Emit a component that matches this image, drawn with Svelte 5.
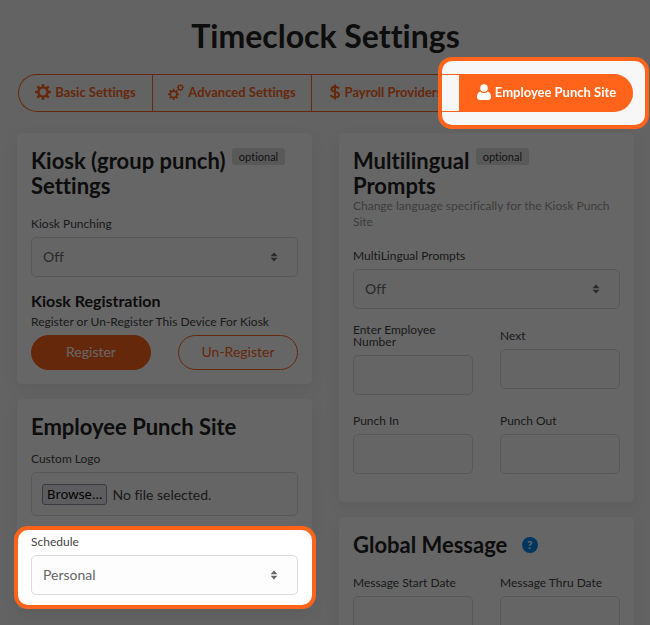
<script lang="ts">
	let schedule = $state('Personal');
	let kioskPunching = $state('Off');
	let multilingual = $state('Off');
	let fileName = $state('');
	let fileInput: HTMLInputElement;

	const prompts = [
		{ id: 'enter-number', label: 'Enter Employee Number' },
		{ id: 'next', label: 'Next' },
		{ id: 'punch-in', label: 'Punch In' },
		{ id: 'punch-out', label: 'Punch Out' }
	];

	const gearTeeth = [0, 45, 90, 135, 180, 225, 270, 315];

	function onFileChange() {
		fileName = fileInput.files?.[0]?.name ?? '';
	}
</script>

{#snippet gear(cx: number, cy: number, scale: number)}
	<g transform="translate({cx} {cy}) scale({scale})">
		<circle r="4.6" fill="none" stroke="currentColor" stroke-width="2.4" />
		{#each gearTeeth as angle}
			<path d="M-1.5 -5 L-1.1 -8 H1.1 L1.5 -5Z" fill="currentColor" transform="rotate({angle})" />
		{/each}
	</g>
{/snippet}

{#snippet arrows()}
	<svg class="arrows" width="8" height="10" viewBox="0 0 8 10" aria-hidden="true">
		<path d="M4 0.4 L7.4 4.2 H0.6Z M4 9.6 L0.6 5.8 H7.4Z" fill="currentColor" />
	</svg>
{/snippet}

<main class="page">
	<h1>Timeclock Settings</h1>

	<nav class="tabs">
		<button class="tab">
			<svg width="16" height="16" viewBox="0 0 16 16" aria-hidden="true">
				{@render gear(8, 8, 1)}
			</svg>
			Basic Settings
		</button>
		<button class="tab">
			<svg width="16" height="16" viewBox="0 0 16 16" aria-hidden="true">
				{@render gear(5.6, 10.3, 0.7)}
				{@render gear(12.4, 3.6, 0.45)}
			</svg>
			Advanced Settings
		</button>
		<button class="tab">
			<svg width="12" height="16" viewBox="0 0 12 16" aria-hidden="true">
				<path
					d="M10 4.6 C9.4 3.2 8 2.7 6 2.7 C3.8 2.7 2.4 3.6 2.4 5.2 C2.4 8.7 10 6.9 10 10.7 C10 12.5 8.3 13.3 6 13.3 C3.8 13.3 2.3 12.6 1.7 11 M6 0.4 V15.6"
					fill="none"
					stroke="currentColor"
					stroke-width="2"
				/>
			</svg>
			Payroll Providers
		</button>
		<div class="spotlight tab-spotlight">
			<button class="tab active">
				<svg width="14" height="16" viewBox="0 0 14 16" aria-hidden="true">
					<circle cx="7" cy="4" r="3.8" fill="currentColor" />
					<path
						d="M3.4 7.4 C1 8 0 10.2 0 13 C0 15 1.2 16 3 16 H11 C12.8 16 14 15 14 13 C14 10.2 13 8 10.6 7.4 C8.8 9.4 5.2 9.4 3.4 7.4Z"
						fill="currentColor"
					/>
				</svg>
				Employee Punch Site
			</button>
		</div>
	</nav>

	<div class="columns">
		<div class="column">
			<section class="card">
				<h2>Kiosk (group punch) <span class="badge">optional</span> Settings</h2>
				<div class="field spaced">
					<label for="kiosk-punching">Kiosk Punching</label>
					<div class="select">
						<select id="kiosk-punching" bind:value={kioskPunching}>
							<option>Off</option>
							<option>On</option>
						</select>
						{@render arrows()}
					</div>
				</div>
				<h3>Kiosk Registration</h3>
				<p class="text">Register or Un-Register This Device For Kiosk</p>
				<div class="pair">
					<button class="pill filled">Register</button>
					<button class="pill">Un-Register</button>
				</div>
			</section>

			<section class="card">
				<h2>Employee Punch Site</h2>
				<div class="field">
					<label for="custom-logo">Custom Logo</label>
					<div class="file">
						<input
							id="custom-logo"
							class="file-input"
							type="file"
							tabindex="-1"
							bind:this={fileInput}
							onchange={onFileChange}
						/>
						<button class="browse" onclick={() => fileInput.click()}>Browse...</button>
						<span>{fileName || 'No file selected.'}</span>
					</div>
				</div>
				<div class="field spaced spotlight field-spotlight">
					<label for="schedule">Schedule</label>
					<div class="select">
						<select id="schedule" bind:value={schedule}>
							<option>Personal</option>
							<option>Company</option>
						</select>
						{@render arrows()}
					</div>
				</div>
			</section>
		</div>

		<div class="column">
			<section class="card tall">
				<h2>Multilingual <span class="badge">optional</span><br />Prompts</h2>
				<p class="hint">Change language specifically for the Kiosk Punch Site</p>
				<div class="field spaced">
					<label for="multilingual">MultiLingual Prompts</label>
					<div class="select">
						<select id="multilingual" bind:value={multilingual}>
							<option>Off</option>
							<option>On</option>
						</select>
						{@render arrows()}
					</div>
				</div>
				<div class="pair prompts">
					{#each prompts as prompt}
						<div class="field">
							<label for={prompt.id}>{prompt.label}</label>
							<input id={prompt.id} type="text" />
						</div>
					{/each}
				</div>
			</section>

			<section class="card">
				<h2>
					Global Message
					<button class="help" aria-label="Help">?</button>
				</h2>
				<div class="pair dates">
					<div class="field">
						<label for="start-date">Message Start Date</label>
						<input id="start-date" type="text" />
					</div>
					<div class="field">
						<label for="thru-date">Message Thru Date</label>
						<input id="thru-date" type="text" />
					</div>
				</div>
			</section>
		</div>
	</div>
</main>

<div class="dim"></div>

<style>
	:global(body) {
		background: #f7f7f7;
		overflow: hidden;
	}

	.page {
		--orange: #ff641a;
		--line: #dcdcdc;
		box-sizing: border-box;
		height: 100vh;
		padding: 16px 16px 0 17px;
		font-family: Lato, 'Liberation Sans', sans-serif;
		font-size: 12px;
		font-variant-ligatures: none;
		color: #444;
	}

	.page :global(*) {
		box-sizing: border-box;
	}

	button,
	input,
	select {
		font: inherit;
		color: inherit;
	}

	button {
		cursor: pointer;
	}

	h1,
	h2,
	h3,
	p {
		margin: 0;
	}

	h1 {
		margin-bottom: 18px;
		font-size: 32px;
		line-height: 40px;
		text-align: center;
		color: #222;
	}

	.tabs {
		display: grid;
		grid-template-columns: 134fr 159fr 148fr 174fr;
		height: 38px;
		margin: 0 1px 21px;
		border-radius: 19px;
	}

	.tab {
		display: flex;
		align-items: center;
		justify-content: center;
		gap: 4px;
		width: 100%;
		height: 38px;
		padding: 0 0 2px;
		border: 1px solid var(--orange);
		border-right: 0;
		background: #fff0;
		font-size: 13px;
		font-weight: 700;
		white-space: nowrap;
		color: var(--orange);
	}

	.tab:first-child {
		border-radius: 19px 0 0 19px;
	}

	.tab.active {
		position: relative;
		border-radius: 0 19px 19px 0;
		background: var(--orange);
		color: #fff;
	}

	/* lifted above the dim layer, with the orange ring drawn behind */
	.spotlight {
		position: relative;
		z-index: 2;
	}

	.spotlight::before {
		content: '';
		position: absolute;
		z-index: -1;
		border: 4px solid var(--orange);
		border-radius: 14px;
		background: #fff;
	}

	.tab-spotlight::before {
		inset: -17px -16px -17px -21px;
		background: #f7f7f7;
	}

	.tab-spotlight::after {
		content: '';
		position: absolute;
		inset: 0 100% 0 -17px;
		border: solid var(--orange);
		border-width: 1px 0;
	}

	.field-spotlight::before {
		inset: -10px -18px -14px -17px;
	}

	.columns {
		display: grid;
		grid-template-columns: 1fr 1fr;
		gap: 27px;
	}

	.column {
		display: flex;
		flex-direction: column;
		gap: 15px;
	}

	.card {
		padding: 15px 14px 14px;
		border-radius: 5px;
		background: #fff;
		box-shadow: 0 5px 15px rgba(0, 0, 0, 0.07);
	}

	.card.tall {
		padding-bottom: 28px;
	}

	h2 {
		font-size: 22px;
		line-height: 25px;
		color: #222;
	}

	h3 {
		margin-top: 15px;
		font-size: 16px;
		line-height: 18px;
		color: #222;
	}

	.badge {
		display: inline-block;
		margin-left: 1px;
		padding: 0 7px;
		border-radius: 3px;
		background: #dedede;
		font-size: 11px;
		font-weight: 400;
		line-height: 17px;
		vertical-align: top;
		color: #333;
	}

	.text {
		margin: 4px 0 5px;
		line-height: 16px;
	}

	.hint {
		line-height: 16px;
		color: #999;
	}

	.field {
		margin-top: 14px;
	}

	.field.spaced {
		margin-top: 20px;
	}

	label {
		display: block;
		margin-bottom: 7px;
		line-height: 12px;
	}

	.select {
		display: grid;
		align-items: center;
	}

	select,
	input[type='text'] {
		width: 100%;
		height: 40px;
		padding: 0 11px;
		border: 1px solid var(--line);
		border-radius: 5px;
		background: #fdfdfd;
	}

	select {
		grid-area: 1 / 1;
		appearance: none;
		padding-bottom: 2px;
		font-size: 14px;
		color: #666;
	}

	.arrows {
		grid-area: 1 / 1;
		justify-self: end;
		margin-right: 20px;
		color: #666;
		pointer-events: none;
	}

	.file {
		display: flex;
		align-items: center;
		gap: 5px;
		height: 44px;
		padding: 0 10px;
		border: 1px solid var(--line);
		border-radius: 5px;
		background: #fdfdfd;
		font-size: 14px;
	}

	.file-input {
		position: absolute;
		width: 1px;
		height: 1px;
		opacity: 0;
	}

	.browse {
		height: 21px;
		padding: 0 4px;
		border: 1px solid #8f8f9d;
		border-radius: 3px;
		background: #e9e9ed;
		font-family: 'Noto Sans', sans-serif;
		font-size: 13px;
		line-height: 18px;
		color: #000;
	}

	.pair {
		display: grid;
		grid-template-columns: 1fr 1fr;
		column-gap: 27px;
	}

	.pair .field {
		margin: 0;
	}

	.prompts {
		align-items: center;
		row-gap: 20px;
		margin-top: 15px;
	}

	.dates {
		margin-top: 20px;
	}

	.pill {
		height: 35px;
		padding: 0 0 2px;
		border: 1px solid var(--orange);
		border-radius: 18px;
		background: #fff;
		font-size: 14px;
		color: var(--orange);
	}

	.pill.filled {
		background: var(--orange);
		color: #fff;
	}

	.help {
		width: 16px;
		height: 16px;
		margin-left: 9px;
		padding: 0;
		border: 0;
		border-radius: 50%;
		background: #0088f0;
		font-size: 11px;
		font-weight: 900;
		line-height: 16px;
		vertical-align: 4px;
		color: #fff;
	}

	.dim {
		position: fixed;
		inset: 0;
		z-index: 1;
		background: rgba(0, 0, 0, 0.6);
	}
</style>
